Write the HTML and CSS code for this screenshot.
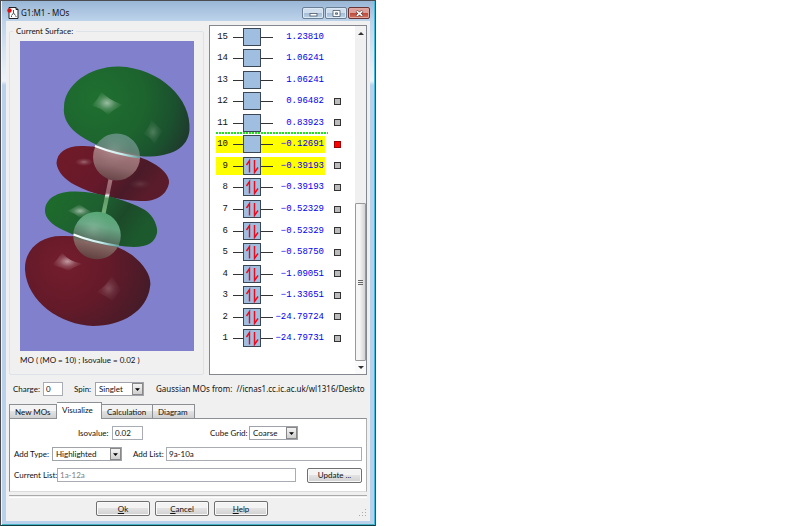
FILE: index.html
```html
<!DOCTYPE html>
<html lang="en">
<head>
<meta charset="utf-8">
<title>G1:M1 - MOs</title>
<link rel="stylesheet" href="styles.css">
</head>
<body>
<main class="window">
  <header class="titlebar">
    <svg class="app-icon" viewBox="0 0 12 12" aria-hidden="true">
      <path d="M2 .5h7l2 2v9H2z" fill="#fff" stroke="#222"/>
      <path d="M9 .5v2h2" fill="none" stroke="#222"/>
      <path d="M6.500 3v3l-2 2.500M6.500 6l2 2.500M4 9.500h1M8.500 9.500h1" fill="none" stroke="#555"/>
      <circle cx="2.500" cy="3.500" r="2.200" fill="#e01010"/>
    </svg>
    <h1 class="title">G1:M1 - MOs</h1>
    <div class="window-buttons">
      <button class="win-btn" type="button" aria-label="Minimize"><svg viewBox="0 0 9 7"><rect x="1" y="3.500" width="7" height="2.500" fill="#fff" stroke="#4a5868" stroke-width=".8"/></svg></button>
      <button class="win-btn" type="button" aria-label="Maximize"><svg viewBox="0 0 9 7"><path d="M1 .5h7v6H1zM3.500 2.800v1.500h2V2.800z" fill="#fff" fill-rule="evenodd" stroke="#4a5868" stroke-width=".8"/></svg></button>
      <button class="win-btn win-close" type="button" aria-label="Close"><svg viewBox="0 0 9 7"><path d="M1.500 1l6 5M7.500 1l-6 5" stroke="#5a3434" stroke-width="2.800"/><path d="M1.800 1.200l5.400 4.600M7.200 1.200L1.800 5.800" stroke="#fff" stroke-width="1.600"/></svg></button>
    </div>
  </header>
  <form class="content">
    <div class="panes">
      <fieldset class="surface">
        <legend>Current Surface:</legend>
        <svg class="orbital" viewBox="20 41 174 310" role="img" aria-label="Molecular orbital surface">
          <defs>
            <radialGradient id="green1" gradientUnits="userSpaceOnUse" cx="96" cy="98" r="98">
              <stop offset="0" stop-color="#1f7030"/><stop offset=".5" stop-color="#1d642e"/><stop offset=".8" stop-color="#1b512e"/><stop offset="1" stop-color="#1e3c2d"/>
            </radialGradient>
            <linearGradient id="green2" x1="0" y1="0" x2="1" y2=".35">
              <stop offset="0" stop-color="#1d6e2a"/><stop offset=".5" stop-color="#1e6030"/><stop offset=".75" stop-color="#1c4a29"/><stop offset="1" stop-color="#1c5a2d"/>
            </linearGradient>
            <linearGradient id="red1" x1="0" y1="0" x2="1" y2=".4">
              <stop offset="0" stop-color="#721a28"/><stop offset=".55" stop-color="#65192a"/><stop offset=".8" stop-color="#4a1a28"/><stop offset="1" stop-color="#5a1c2a"/>
            </linearGradient>
            <radialGradient id="red2" gradientUnits="userSpaceOnUse" cx="65" cy="264" r="88">
              <stop offset="0" stop-color="#741d2d"/><stop offset=".5" stop-color="#641a29"/><stop offset="1" stop-color="#451b28"/>
            </radialGradient>
            <radialGradient id="shine">
              <stop offset="0" stop-color="#fff" stop-opacity=".55"/><stop offset=".5" stop-color="#fff" stop-opacity=".2"/><stop offset="1" stop-color="#fff" stop-opacity="0"/>
            </radialGradient>
            <linearGradient id="atom1" x1=".6" y1="0" x2=".4" y2="1">
              <stop offset="0" stop-color="#5d8f7b"/><stop offset=".35" stop-color="#5f8274"/><stop offset=".42" stop-color="#a3767b"/><stop offset=".7" stop-color="#8e686b"/><stop offset="1" stop-color="#684448"/>
            </linearGradient>
            <linearGradient id="atom2" x1=".6" y1="0" x2=".4" y2="1">
              <stop offset="0" stop-color="#55a774"/><stop offset=".3" stop-color="#66a582"/><stop offset=".6" stop-color="#55705f"/><stop offset=".68" stop-color="#866663"/><stop offset="1" stop-color="#60413f"/>
            </linearGradient>
            <linearGradient id="bond" x1="0" y1="0" x2="0" y2="1">
              <stop offset="0" stop-color="#a5747d"/><stop offset=".4" stop-color="#94606b"/><stop offset=".47" stop-color="#e2e5e8"/><stop offset=".55" stop-color="#659b69"/><stop offset="1" stop-color="#75b17b"/>
            </linearGradient>
            <linearGradient id="band"><stop offset="0" stop-color="#fff"/><stop offset=".6" stop-color="#c6eeee"/><stop offset="1" stop-color="#5e9d95"/></linearGradient>
          </defs>
          <rect x="20" y="41" width="174" height="310" fill="#8080cc"/>
          <path fill="url(#green1)" d="M64 107C64 85 90 66 119 66.500C160 68 192 99 189.500 130C188 149 170 157 144 156.500C119 154 91 146 73 130C66 123 63 115 64 107Z"/>
          <path fill="url(#red1)" d="M56.500 163C57 152 67 145 84 146C106 147 128 152 147 160C160 166 170 175 169 183C167 193 159 202 140 201C116 200 92 194 75 185C65 180 57 171 56.500 163Z"/>
          <path fill="url(#red2)" d="M25 270C24 251 39 236 61 236C82 235 112 241 132 255C146 266 152 278 150 287C147 311 122 326 93 326C61 325 27 302 25 270Z"/>
          <path fill="url(#green2)" d="M45 211C45 198 58 191 76 191.500C100 192 127 200 145 210C154 216 158 227 157 233C155 242 148 247 134 247C111 246 82 240 63 230C52 225 45 218 45 211Z"/>
          <path fill="url(#shine)" d="M91 106Q99 99 101 91Q107 99 123 105Q114 109 108 115Q101 107 91 106Z"/>
          <path fill="url(#shine)" opacity=".4" d="M143 134Q150 127 151 119Q157 126 163 131Q158 136 155 145Q151 137 143 134Z"/>
          <ellipse cx="84" cy="162" rx="9" ry="4" fill="url(#shine)" opacity=".6"/>
          <ellipse cx="140" cy="184" rx="11" ry="5" fill="url(#shine)" opacity=".2"/>
          <path fill="url(#shine)" d="M67 211Q76 207 79 204Q83 207 93 213Q84 215 80 218Q75 213 67 211Z"/>
          <path fill="url(#shine)" d="M52 265Q59 258 62 252Q67 261 83 264Q73 267 69 271Q61 267 52 265Z"/>
          <path fill="url(#shine)" opacity=".4" d="M96 292Q107 286 112 275Q116 283 121 290Q116 295 113 302Q107 296 96 292Z"/>
          <path fill="url(#bond)" d="M108.500 179l4 1l-7 34l-4-1z"/>
          <circle cx="116.500" cy="157" r="23.500" fill="url(#atom1)"/>
          <circle cx="114" cy="150" r="17" fill="url(#shine)" opacity=".25"/>
          <path d="M95 146Q115 154 140 157.500" fill="none" stroke="url(#band)" stroke-width="2"/>
          <circle cx="97" cy="235.500" r="23.800" fill="url(#atom2)"/>
          <circle cx="93" cy="229" r="17" fill="url(#shine)" opacity=".3"/>
          <path d="M73.500 234.500Q92 242 119 246" fill="none" stroke="url(#band)" stroke-width="2"/>
        </svg>
        <p class="caption">MO ( (MO = 10) ; Isovalue = 0.02 )</p>
      </fieldset>
      <section class="list-box" aria-label="Orbital energies">
        <svg class="defs" aria-hidden="true">
          <symbol id="vacant" viewBox="0 0 40 20"><path d="M0 10.500h40" stroke="#333"/><rect x="10.500" y="1.500" width="17" height="17" fill="#a0bee0" stroke="#3a4654"/></symbol>
          <symbol id="filled" viewBox="0 0 40 20"><use href="#vacant"/><path d="M16.500 16.500V4.500L13.500 9M21.500 4v12.500L25 11.500" fill="none" stroke="#f00818" stroke-width="1.400"/></symbol>
        </svg>
        <ol class="levels">
          <li class="level"><span class="num">15</span><svg class="box"><use href="#vacant"/></svg><span class="energy">1.23810</span></li>
          <li class="level"><span class="num">14</span><svg class="box"><use href="#vacant"/></svg><span class="energy">1.06241</span></li>
          <li class="level"><span class="num">13</span><svg class="box"><use href="#vacant"/></svg><span class="energy">1.06241</span></li>
          <li class="level"><span class="num">12</span><svg class="box"><use href="#vacant"/></svg><span class="energy">0.96482</span><input class="mark" type="checkbox" aria-label="Surface 12"></li>
          <li class="level"><span class="num">11</span><svg class="box"><use href="#vacant"/></svg><span class="energy">0.83923</span><input class="mark" type="checkbox" aria-label="Surface 11"></li>
          <li class="level picked lumo"><span class="num">10</span><svg class="box"><use href="#vacant"/></svg><span class="energy">−0.12691</span><input class="mark" type="checkbox" checked aria-label="Surface 10"></li>
          <li class="level picked"><span class="num">9</span><svg class="box"><use href="#filled"/></svg><span class="energy">−0.39193</span><input class="mark" type="checkbox" aria-label="Surface 9"></li>
          <li class="level"><span class="num">8</span><svg class="box"><use href="#filled"/></svg><span class="energy">−0.39193</span><input class="mark" type="checkbox" aria-label="Surface 8"></li>
          <li class="level"><span class="num">7</span><svg class="box"><use href="#filled"/></svg><span class="energy">−0.52329</span><input class="mark" type="checkbox" aria-label="Surface 7"></li>
          <li class="level"><span class="num">6</span><svg class="box"><use href="#filled"/></svg><span class="energy">−0.52329</span><input class="mark" type="checkbox" aria-label="Surface 6"></li>
          <li class="level"><span class="num">5</span><svg class="box"><use href="#filled"/></svg><span class="energy">−0.58750</span><input class="mark" type="checkbox" aria-label="Surface 5"></li>
          <li class="level"><span class="num">4</span><svg class="box"><use href="#filled"/></svg><span class="energy">−1.09051</span><input class="mark" type="checkbox" aria-label="Surface 4"></li>
          <li class="level"><span class="num">3</span><svg class="box"><use href="#filled"/></svg><span class="energy">−1.33651</span><input class="mark" type="checkbox" aria-label="Surface 3"></li>
          <li class="level"><span class="num">2</span><svg class="box"><use href="#filled"/></svg><span class="energy">−24.79724</span><input class="mark" type="checkbox" aria-label="Surface 2"></li>
          <li class="level"><span class="num">1</span><svg class="box"><use href="#filled"/></svg><span class="energy">−24.79731</span><input class="mark" type="checkbox" aria-label="Surface 1"></li>
        </ol>
        <div class="scrollbar">
          <button class="scroll-btn" type="button" aria-label="Scroll up"><svg viewBox="0 0 6 4"><path d="M0 4l3-3 3 3z" fill="#333"/></svg></button>
          <div class="track"><div class="thumb"><svg viewBox="0 0 5 7"><path d="M0 1.500h5M0 3.500h5M0 5.500h5" stroke="#666"/></svg></div></div>
          <button class="scroll-btn scroll-down" type="button" aria-label="Scroll down"><svg viewBox="0 0 6 4"><path d="M0 0l3 3 3-3z" fill="#333"/></svg></button>
        </div>
      </section>
    </div>

    <div class="state">
      <label for="charge">Charge:</label>
      <input class="field narrow" id="charge" value="0">
      <label class="spin-label" for="spin">Spin:</label>
      <span class="select"><select id="spin"><option>Singlet</option></select><svg class="arrow" viewBox="0 0 11 12"><path d="M2.500 5h6l-3 3.500z"/></svg></span>
      <output class="source">Gaussian MOs from:&nbsp; //icnas1.cc.ic.ac.uk/wl1316/Deskto</output>
    </div>

    <div class="tabs" role="tablist">
      <button class="tab tab-new" type="button" role="tab">New MOs</button>
      <button class="tab tab-active" type="button" role="tab" aria-selected="true">Visualize</button>
      <button class="tab tab-calc" type="button" role="tab">Calculation</button>
      <button class="tab tab-diagram" type="button" role="tab">Diagram</button>
    </div>
    <section class="panel" role="tabpanel">
      <div class="row row-iso">
        <label for="iso">Isovalue:</label>
        <input class="field iso" id="iso" value="0.02">
        <label class="grid-label" for="grid">Cube Grid:</label>
        <span class="select"><select id="grid"><option>Coarse</option></select><svg class="arrow" viewBox="0 0 11 12"><path d="M2.500 5h6l-3 3.500z"/></svg></span>
      </div>
      <div class="row">
        <label class="type-label" for="type">Add Type:</label>
        <span class="select wide"><select id="type"><option>Highlighted</option></select><svg class="arrow" viewBox="0 0 11 12"><path d="M2.500 5h6l-3 3.500z"/></svg></span>
        <label class="list-label" for="list">Add List:</label>
        <input class="field grow" id="list" value="9a-10a">
      </div>
      <div class="row">
        <label class="current-label" for="current">Current List:</label>
        <input class="field grow readonly" id="current" value="1a-12a" readonly>
        <button class="btn update" type="button">Update ...</button>
      </div>
    </section>
    <hr class="rule">
    <footer class="actions">
      <button class="btn" type="button"><u>O</u>k</button>
      <button class="btn" type="button"><u>C</u>ancel</button>
      <button class="btn" type="button"><u>H</u>elp</button>
      <svg class="grip" viewBox="0 0 8 8" aria-hidden="true"><path d="M6 0h1v1H6zM3 3h1v1H3zM6 3h1v1H6zM0 6h1v1H0zM3 6h1v1H3zM6 6h1v1H6z" fill="#aaa"/></svg>
    </footer>
  </form>
</main>
</body>
</html>
```
FILE: styles.css
```css
* { box-sizing: border-box; }

body {
  margin: 0;
  background: #fff;
  color: #111;
  font: 8px/12px Lato, "Liberation Sans", sans-serif;
}

h1, p, ol, fieldset { margin: 0; padding: 0; }
button, input, select { font: inherit; color: inherit; margin: 0; }
svg { display: block; }

.window {
  display: flex;
  flex-direction: column;
  width: 47%;
  min-width: 376px;
  min-height: 100vh;
  padding: 0 4px 4px;
  border: 1px solid #4c4b50;
  border-bottom-color: #123c44;
  background: linear-gradient(#9ab6d6, #bdd3ea 20px, #dfe9f4 60px, #eef3f9 80px, #b9d1ea 84px);
  box-shadow: inset 1px 0 #f2f6fa, inset -1px 0 #3bbcdc, inset 0 -1px #45b4c4;
}

.titlebar {
  display: flex;
  align-items: center;
  height: 20px;
  padding: 4px 1px 0 2px;
}
.app-icon { width: 12px; height: 12px; }
.title {
  flex: 1;
  margin-left: 2px;
  font: 8px/12px "Noto Sans", sans-serif;
}
.window-buttons { display: flex; gap: 1px; align-self: center; }
.win-btn {
  display: grid;
  place-items: center;
  width: 22px;
  height: 12px;
  padding: 0;
  border: 1px solid #6a7e94;
  border-radius: 2px;
  background: linear-gradient(#d0deed 45%, #a4bcd6 50%, #bdd2e8);
  box-shadow: inset 0 0 0 1px #dce8f4;
}
.win-btn svg { width: 9px; height: 7px; }
.win-close {
  border-color: #6b3434;
  background: linear-gradient(#dda09a 45%, #bc4838 50%, #cf7562);
  box-shadow: inset 0 0 0 1px #e0a8a0;
}

.content {
  display: flex;
  flex: 1;
  flex-direction: column;
  margin: 0 1px;
  padding: 4px 3px 4px;
  background: #f0f0f0;
}

.panes {
  display: grid;
  grid-template-columns: minmax(0, 1fr) 158px;
  gap: 5px;
}
.surface {
  min-width: 0;
  padding: 4px 9px 5px 10px;
  border: 1px solid #dde3e8;
  border-radius: 2px;
}
.surface legend { margin-left: -7px; padding: 0 3px; }
.orbital { width: 100%; height: auto; }
.caption { line-height: 18px; }

.list-box {
  display: flex;
  justify-content: space-between;
  border: 1px solid #83878e;
  background: #fff;
}
.defs { position: absolute; width: 0; height: 0; }
.levels {
  display: grid;
  grid-template-rows: repeat(15, 1fr);
  height: 323px;
  padding-left: 6px;
  list-style: none;
  font: 9px/12px "Liberation Mono", monospace;
}
.level {
  position: relative;
  display: grid;
  grid-template-columns: 12px 40px 51px 8px;
  align-items: center;
  column-gap: 5px;
}
.num { text-align: right; z-index: 1; }
.box { width: 40px; height: 20px; z-index: 1; }
.energy {
  margin-left: -10px;
  padding-right: 5px;
  color: #0000f0;
  text-align: right;
  z-index: 1;
}
.picked::before {
  content: "";
  position: absolute;
  inset: 2px 17px 2px 0;
  background: #ff0;
}
.lumo::after {
  content: "";
  position: absolute;
  inset: -2px 14px auto 0;
  height: 2px;
  background: repeating-linear-gradient(90deg, #20e020 0 2px, #fff 2px 3px);
}
.mark {
  appearance: none;
  width: 7px;
  height: 7px;
  border: 1px solid #333;
  background: #bbb;
}
.mark:checked { border-color: #a00000; background: #f00; }

.scrollbar {
  display: flex;
  flex-direction: column;
  width: 11px;
  background: #f0f0f0;
}
.scroll-btn {
  display: grid;
  place-items: center;
  height: 13px;
  padding: 0;
  border: 0;
  background: #f2f2f2;
}
.scroll-btn svg { width: 6px; height: 4px; }
.scroll-down { background: #fafafa; }
.track {
  display: flex;
  flex: 1;
  flex-direction: column;
  justify-content: flex-end;
}
.thumb {
  display: grid;
  place-items: center;
  height: 49%;
  border: 1px solid #999;
  border-radius: 1px;
  background: linear-gradient(90deg, #f6f6f6 40%, #d2d2d4);
}
.thumb svg { width: 5px; height: 7px; }

.state, .row {
  display: flex;
  align-items: center;
  height: 14px;
  white-space: nowrap;
}
.state { margin-top: 7px; padding-left: 4px; }
.state label:first-child { width: 30px; }
.spin-label { width: 21px; margin-left: 11px; }
.source {
  margin-left: 12px;
  font: 8px/12px "Noto Sans", sans-serif;
}

.field {
  min-width: 0;
  height: 14px;
  padding: 0 2px;
  border: 1px solid #a9adb3;
  background: #fff;
}
.narrow { width: 20px; }
.iso { width: 31px; }
.grow { flex: 1; }
.readonly { color: #808080; }

.select {
  position: relative;
  width: 49px;
  height: 14px;
}
.wide { width: 70px; }
.select select {
  display: block;
  appearance: none;
  width: 100%;
  height: 100%;
  padding: 0 12px 1px 3px;
  border: 1px solid #a0a4aa;
  border-radius: 0;
  background: #fff;
}
.arrow {
  position: absolute;
  top: 1px;
  right: 1px;
  width: 11px;
  height: 12px;
  border: 1px solid #888;
  background: linear-gradient(#f4f4f4, #cfcfcf);
  pointer-events: none;
}

.tabs {
  display: flex;
  align-items: flex-end;
  height: 16px;
  margin-top: 6px;
}
.tab {
  height: 14px;
  padding: 0 5px;
  border: 1px solid #8c8f94;
  border-bottom: 0;
  border-left-width: 0;
  background: linear-gradient(#f3f3f3 45%, #e2e2e2 50%, #d0d0d0);
  text-align: left;
}
.tab-new { width: 48px; border-left-width: 1px; }
.tab-active {
  width: 45px;
  height: 17px;
  margin-bottom: -1px;
  padding-bottom: 2px;
  background: #fff;
  z-index: 1;
}
.tab-calc { width: 51px; }
.tab-diagram { width: 42px; }

.panel {
  display: flex;
  flex-direction: column;
  gap: 7px;
  padding: 7px 4px 9px;
  border: 1px solid #8c8f94;
  border-right-color: #b0b0b0;
  border-bottom-color: #dcdcdc;
  background: #fff;
}
.row-iso { padding-left: 64px; }
.row-iso label:first-child { width: 34px; }
.grid-label { width: 39px; margin-left: 67px; }
.type-label { width: 38px; }
.list-label { width: 33px; margin-left: 11px; }
.current-label { width: 43px; }

.btn {
  width: 54px;
  height: 15px;
  padding: 0;
  border: 1px solid #707070;
  border-radius: 2px;
  background: linear-gradient(#f3f3f3 45%, #e2e2e2 50%, #d0d0d0);
  box-shadow: inset 0 0 0 1px #fafafa;
}
.update { width: 55px; margin-left: 11px; }

.rule {
  width: 100%;
  height: 3px;
  margin: 3px 0;
  border: 0;
  border-top: 1px solid #aaa;
  border-bottom: 1px solid #fff;
}
.actions {
  position: relative;
  display: flex;
  justify-content: center;
  gap: 5px;
  padding-right: 12px;
}
.grip {
  position: absolute;
  right: 0;
  bottom: -1px;
  width: 8px;
  height: 8px;
}
```
